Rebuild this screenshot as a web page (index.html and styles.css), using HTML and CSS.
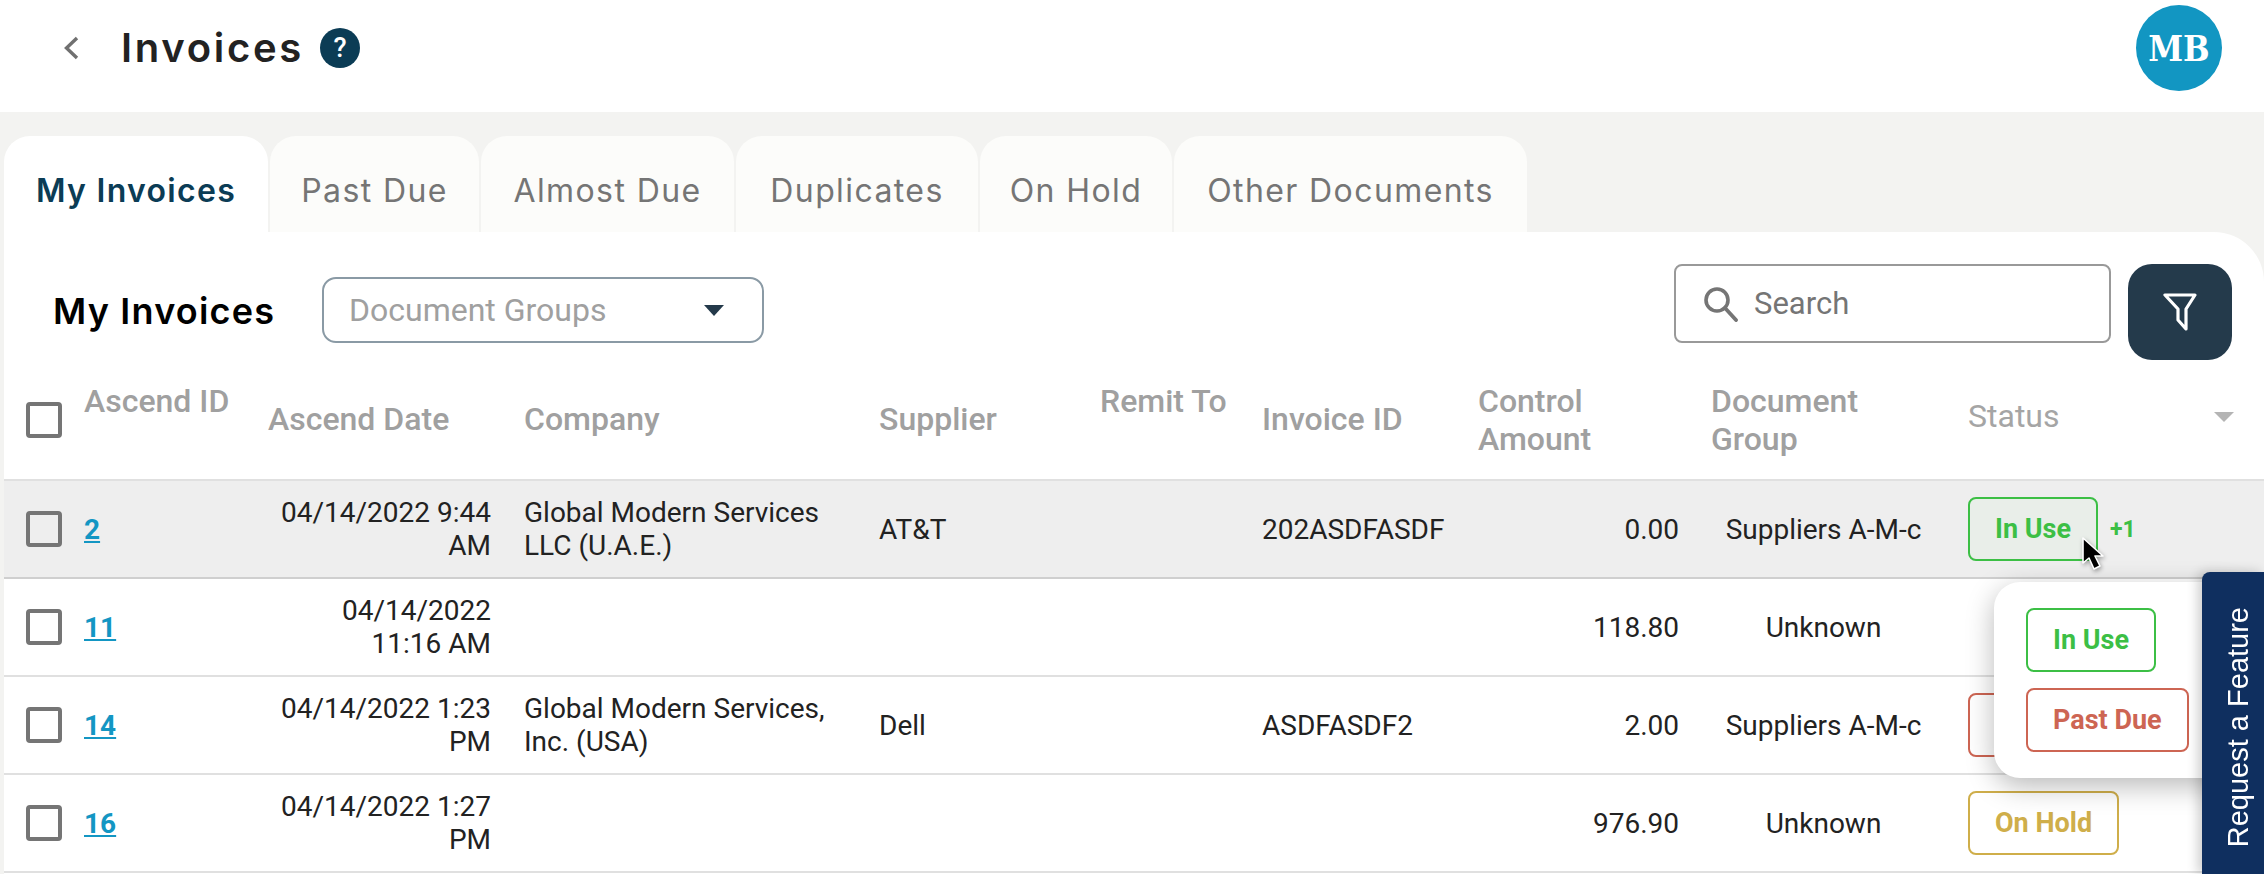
FILE: index.html
```html
<!DOCTYPE html>
<html lang="en">
<head>
<meta charset="utf-8">
<title>Invoices</title>
<link rel="stylesheet" href="styles.css">
</head>
<body>
<header class="topbar">
  <svg class="back" width="16" height="24" viewBox="0 0 16 24"><path d="M14 2 3.5 12 14 22" fill="none" stroke="#707070" stroke-width="3.4"/></svg>
  <h1 class="page-title">Invoices</h1>
  <span class="help">?</span>
  <span class="avatar">MB</span>
</header>
<nav class="tabs">
  <a class="tab tab-active t1">My Invoices</a>
  <a class="tab t2">Past Due</a>
  <a class="tab t3">Almost Due</a>
  <a class="tab t4">Duplicates</a>
  <a class="tab t5">On Hold</a>
  <a class="tab t6">Other Documents</a>
</nav>
<main class="panel">
  <div class="toolbar">
    <h2 class="section-title">My Invoices</h2>
    <div class="select">
      <span>Document Groups</span>
      <i class="select-caret"></i>
    </div>
    <div class="search">
      <svg width="36" height="36" viewBox="0 0 36 36"><circle cx="14" cy="14" r="11" fill="none" stroke="#757575" stroke-width="3.6"/><path d="M22 22 33 34" stroke="#757575" stroke-width="3.8" stroke-linecap="round"/></svg>
      <span>Search</span>
    </div>
    <button class="filter" type="button">
      <svg width="34" height="38" viewBox="0 0 34 38"><path d="M2 2h30l-9 14v20l-8-9V16z" fill="none" stroke="#fff" stroke-width="3.2" stroke-linejoin="round"/></svg>
    </button>
  </div>
  <div class="row head">
    <div class="cell"><span class="check"></span></div>
    <div class="hc top">Ascend ID</div>
    <div class="hc mid">Ascend Date</div>
    <div class="hc mid">Company</div>
    <div class="hc mid">Supplier</div>
    <div class="hc top2">Remit To</div>
    <div class="hc mid">Invoice ID</div>
    <div class="hc top2 narrow">Control Amount</div>
    <div class="hc top2 narrow">Document Group</div>
    <div class="hc status-head">Status<i class="sort-caret"></i></div>
  </div>
  <div class="row hover">
    <div class="cell"><span class="check"></span></div>
    <div class="cell"><a class="id">2</a></div>
    <div class="cell date">04/14/2022 9:44 AM</div>
    <div class="cell">Global Modern Services LLC (U.A.E.)</div>
    <div class="cell">AT&amp;T</div>
    <div class="cell"></div>
    <div class="cell">202ASDFASDF</div>
    <div class="cell num">0.00</div>
    <div class="cell grp">Suppliers A-M-c</div>
    <div class="cell"><span class="badge green tint">In Use</span><span class="more">+1</span></div>
  </div>
  <div class="row">
    <div class="cell"><span class="check"></span></div>
    <div class="cell"><a class="id">11</a></div>
    <div class="cell date">04/14/2022 11:16 AM</div>
    <div class="cell"></div>
    <div class="cell"></div>
    <div class="cell"></div>
    <div class="cell"></div>
    <div class="cell num">118.80</div>
    <div class="cell grp">Unknown</div>
    <div class="cell"></div>
  </div>
  <div class="row">
    <div class="cell"><span class="check"></span></div>
    <div class="cell"><a class="id">14</a></div>
    <div class="cell date">04/14/2022 1:23 PM</div>
    <div class="cell">Global Modern Services, Inc. (USA)</div>
    <div class="cell">Dell</div>
    <div class="cell"></div>
    <div class="cell">ASDFASDF2</div>
    <div class="cell num">2.00</div>
    <div class="cell grp">Suppliers A-M-c</div>
    <div class="cell"><span class="badge red covered"></span></div>
  </div>
  <div class="row">
    <div class="cell"><span class="check"></span></div>
    <div class="cell"><a class="id">16</a></div>
    <div class="cell date">04/14/2022 1:27 PM</div>
    <div class="cell"></div>
    <div class="cell"></div>
    <div class="cell"></div>
    <div class="cell"></div>
    <div class="cell num">976.90</div>
    <div class="cell grp">Unknown</div>
    <div class="cell"><span class="badge gold">On Hold</span></div>
  </div>
</main>
<div class="popup">
  <span class="badge green">In Use</span>
  <span class="badge red">Past Due</span>
</div>
<aside class="feature"><span>Request a Feature</span></aside>
<svg class="cursor" width="26" height="38" viewBox="0 0 26 38"><path d="M2 2v25l6-5 5 11 6-3-5-10h8z" fill="#000" stroke="#fff" stroke-width="1.6" stroke-linejoin="round"/></svg>
</body>
</html>
```
FILE: styles.css
```css
* { box-sizing: border-box; }
html, body { margin: 0; height: 874px; overflow: hidden; }
body { position: relative; background: #f3f3f1; font-family: Roboto, sans-serif; font-size: 28px; color: #222; }

.topbar { height: 112px; background: #fff; display: flex; align-items: center; padding: 0 42px 16px 63px; }
.back { margin-right: 42px; }
.page-title { margin: 0 16px 0 0; font-family: Inter, sans-serif; font-weight: 600; font-size: 40px; letter-spacing: 2.7px; color: #222; line-height: 1; }
.help { width: 40px; height: 40px; border-radius: 50%; background: #0b3c55; color: #fff; font-size: 27px; font-weight: 500; display: flex; align-items: center; justify-content: center; }
.avatar { margin-left: auto; width: 86px; height: 86px; border-radius: 50%; background: #1296c2; color: #fff; font-family: "DejaVu Serif Condensed", "DejaVu Serif", serif; font-weight: 700; font-size: 35px; display: flex; align-items: center; justify-content: center; }

.tabs { height: 120px; padding: 24px 0 0 4px; display: flex; gap: 2px; }
.tab { background: #fcfcfa; border-radius: 26px 26px 0 0; padding-top: 12px; display: flex; align-items: center; justify-content: center; font-family: Inter, sans-serif; font-size: 32px; letter-spacing: 1.4px; color: #757575; white-space: nowrap; }
.tab-active { background: #fff; color: #0b3c55; font-weight: 600; letter-spacing: 1.3px; }
.t1 { width: 264px; }
.t2 { width: 209px; }
.t3 { width: 253px; }
.t4 { width: 242px; }
.t5 { width: 192px; }
.t6 { width: 353px; }

.panel { margin-left: 4px; background: #fff; border-radius: 0 50px 0 0; height: 642px; }
.toolbar { height: 138px; position: relative; display: flex; align-items: flex-start; padding: 32px 32px 0 49px; }
.section-title { margin: 0; width: 269px; flex: none; padding-top: 22px; font-family: Inter, sans-serif; font-weight: 600; font-size: 36px; letter-spacing: 1.2px; color: #000; line-height: 50px; white-space: nowrap; }
.select { width: 442px; height: 66px; margin-top: 13px; flex: none; border: 2px solid #8a9aa5; border-radius: 14px; display: flex; align-items: center; justify-content: space-between; padding: 0 38px 0 25px; color: #a0a0a0; font-size: 32px; }
.select-caret { width: 0; height: 0; border-left: 10px solid transparent; border-right: 10px solid transparent; border-top: 11px solid #24394a; }
.search { margin-left: auto; width: 437px; height: 79px; flex: none; border: 2px solid #999; border-radius: 8px; display: flex; align-items: center; gap: 15px; padding: 0 0 0 27px; color: #757575; font-size: 31px; }
.filter { margin-left: 17px; width: 104px; height: 96px; flex: none; border: 0; border-radius: 24px; background: #243a4b; display: flex; align-items: center; justify-content: center; padding: 0; }

.row { display: grid; grid-template-columns: 80px 184px 256px 355px 221px 162px 216px 233px 257px 296px; height: 98px; border-bottom: 2px solid #e0e0e0; position: relative; }
.head { height: 111px; }
.hover { background: #eee; border-bottom-color: #cfcfcf; }
.cell { display: flex; align-items: center; line-height: 33px; padding-right: 33px; }
.cell:first-child { padding: 0 0 0 22px; }
.hc { color: #a0a0a0; font-weight: 500; font-size: 32px; line-height: 38px; padding-right: 20px; }
.hc.top { padding-top: 12px; padding-right: 0; white-space: nowrap; }
.hc.mid { padding-top: 30px; }
.hc.top2 { padding-top: 12px; }
.hc.narrow { padding-right: 60px; }
.status-head { font-weight: 400; padding-top: 27px; display: flex; justify-content: space-between; padding-right: 30px; color: #a5a5a5; font-size: 32px; height: 90px; }
.sort-caret { width: 0; height: 0; margin-top: 15px; border-left: 10px solid transparent; border-right: 10px solid transparent; border-top: 10px solid #b4b4b4; }
.check { width: 36px; height: 36px; border: 4px solid #757575; border-radius: 4px; display: block; }
.head .cell:first-child { align-items: flex-start; padding-top: 32px; }
.id { color: #1396c3; font-weight: 700; text-decoration: underline; }
.date { justify-content: flex-end; text-align: right; }
.num { justify-content: flex-end; padding-right: 32px; }
.grp { justify-content: center; padding-right: 32px; white-space: nowrap; }

.badge { display: inline-flex; align-items: center; height: 64px; padding: 0 25px; border: 2px solid; border-radius: 8px; font-weight: 700; font-size: 27px; background: #fff; white-space: nowrap; }
.covered { width: 165px; }
.green { color: #3cbf45; border-color: #3cbf45; }
.tint { background: #e9eee9; }
.red { color: #cd6553; border-color: #cd6553; }
.gold { color: #cfae4a; border-color: #cfae4a; }
.more { margin-left: 12px; color: #3cbf45; font-weight: 700; font-size: 23px; }

.popup { position: absolute; left: 1994px; top: 582px; width: 240px; height: 196px; background: #fff; border-radius: 26px 0 0 26px; box-shadow: 0 8px 28px rgba(0,0,0,.28); padding: 26px 0 0 32px; display: flex; flex-direction: column; align-items: flex-start; gap: 16px; }
.feature { position: absolute; left: 2202px; top: 572px; width: 62px; height: 302px; background: #0f2f5f; border-radius: 8px 0 0 0; display: flex; align-items: center; justify-content: center; color: #fff; font-family: "Liberation Sans", sans-serif; font-size: 29px; padding: 8px 0 0 10px; box-shadow: -4px 0 12px rgba(0,0,0,.2); }
.feature span { writing-mode: vertical-rl; transform: rotate(180deg); white-space: nowrap; }
.cursor { position: absolute; left: 2081px; top: 536px; filter: drop-shadow(1px 2px 2px rgba(0,0,0,.35)); }
```
